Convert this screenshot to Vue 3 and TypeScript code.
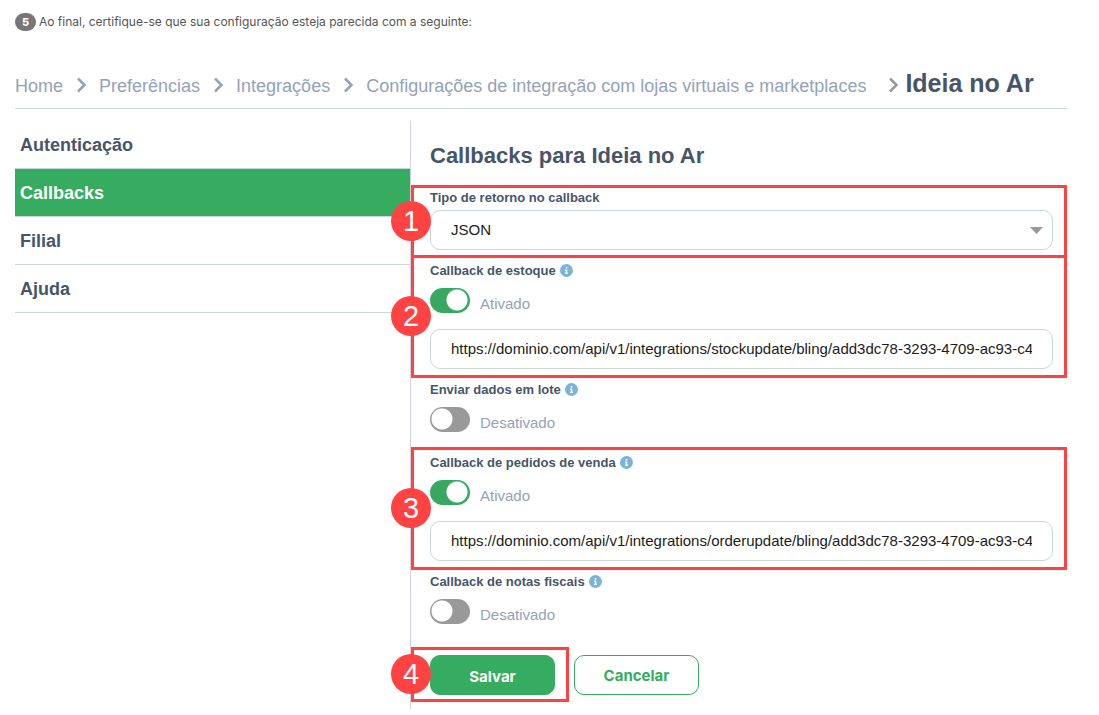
<script setup lang="ts">
import { reactive, ref } from 'vue'

interface Crumb {
  label: string
}

interface Callback {
  id: string
  title: string
  active: boolean
  step?: number
  url?: string
}

const crumbs: Crumb[] = [
  { label: 'Home' },
  { label: 'Preferências' },
  { label: 'Integrações' },
  { label: 'Configurações de integração com lojas virtuais e marketplaces' },
]

const tabs: string[] = ['Autenticação', 'Callbacks', 'Filial', 'Ajuda']
const currentTab = ref('Callbacks')
const returnType = ref('JSON')

const callbacks = reactive<Callback[]>([
  {
    id: 'estoque',
    title: 'Callback de estoque',
    active: true,
    step: 2,
    url: 'https://dominio.com/api/v1/integrations/stockupdate/bling/add3dc78-3293-4709-ac93-c4',
  },
  { id: 'lote', title: 'Enviar dados em lote', active: false },
  {
    id: 'pedidos',
    title: 'Callback de pedidos de venda',
    active: true,
    step: 3,
    url: 'https://dominio.com/api/v1/integrations/orderupdate/bling/add3dc78-3293-4709-ac93-c4',
  },
  { id: 'notas', title: 'Callback de notas fiscais', active: false },
])
</script>

<template>
  <main class="page">
    <p class="intro"><span class="intro-step">5</span>Ao final, certifique-se que sua configuração esteja parecida com a seguinte:</p>

    <header class="crumbs">
      <template v-for="crumb in crumbs" :key="crumb.label">
        <a class="crumb" href="#">{{ crumb.label }}</a>
        <svg class="chevron" viewBox="0 0 10 16" aria-hidden="true"><path d="M1 1.500 7.500 8 1 14.500" /></svg>
      </template>
      <h1 class="page-title">Ideia no Ar</h1>
    </header>

    <div class="columns">
      <nav class="tabs">
        <a
          v-for="tab in tabs"
          :key="tab"
          class="tab"
          :class="{ current: tab === currentTab }"
          href="#"
          @click.prevent="currentTab = tab"
        >{{ tab }}</a>
      </nav>

      <form class="panel" @submit.prevent>
        <h2 class="panel-title">Callbacks para Ideia no Ar</h2>

        <section class="group marked type-group">
          <span class="step">1</span>
          <label class="label" for="return-type">Tipo de retorno no callback</label>
          <div class="select-wrap">
            <select id="return-type" v-model="returnType" class="field">
              <option>JSON</option>
              <option>XML</option>
            </select>
            <svg class="caret" viewBox="0 0 13 7" aria-hidden="true"><path d="M0 0h13L6.500 7z" /></svg>
          </div>
        </section>

        <section
          v-for="item in callbacks"
          :key="item.id"
          class="group"
          :class="item.step ? 'marked' : 'plain'"
        >
          <span v-if="item.step" class="step">{{ item.step }}</span>
          <div class="label-row">
            <label class="label" :for="item.id">{{ item.title }}</label>
            <svg class="info" viewBox="0 0 13 13" aria-hidden="true">
              <circle cx="6.500" cy="6.500" r="6.500" />
              <path d="M5.700 3h1.600v1.500H5.700zM5 5.400h2.300v3.400H8v1.100H5V8.800h.7V6.500H5z" />
            </svg>
          </div>
          <div class="toggle-row">
            <input :id="item.id" v-model="item.active" class="toggle" type="checkbox" role="switch" />
            <span class="status">{{ item.active ? 'Ativado' : 'Desativado' }}</span>
          </div>
          <input v-if="item.url" v-model="item.url" class="field url" type="text" :aria-label="'URL: ' + item.title" />
        </section>

        <div class="actions">
          <div class="save-frame">
            <span class="step">4</span>
            <button class="button primary" type="submit">Salvar</button>
          </div>
          <button class="button" type="button">Cancelar</button>
        </div>
      </form>
    </div>
  </main>
</template>

<style>
body {
  margin: 0;
  background: #fff;
}
</style>

<style scoped>
.page,
.page * {
  box-sizing: border-box;
}

.page {
  padding: 12px 32px 6px 15px;
  font-family: "Liberation Sans", Arial, sans-serif;
  color: #475569;
}

.intro {
  display: flex;
  align-items: center;
  gap: 3px;
  margin: 0;
  font: 12px/20px Inter, sans-serif;
  color: #555;
}

.intro-step {
  width: 21px;
  height: 18px;
  border-radius: 9px;
  background: #777;
  color: #fff;
  font-size: 11px;
  font-weight: 800;
  line-height: 18px;
  text-align: center;
}

.crumbs {
  display: flex;
  align-items: baseline;
  height: 77px;
  padding-top: 36px;
  border-bottom: 1px solid #cbd5e1;
  white-space: nowrap;
}

.crumb {
  font-size: 18px;
  line-height: 30px;
  color: #94a3b8;
  text-decoration: none;
}

.chevron {
  flex: none;
  align-self: flex-start;
  width: 10px;
  height: 16px;
  margin: 9px 12px 0 14px;
  fill: none;
  stroke: #94a3b8;
  stroke-width: 2.5;
}

.chevron:last-of-type {
  margin-right: 6px;
  margin-left: 23px;
  stroke: #999;
}

.page-title {
  margin: 0;
  font-size: 25px;
  line-height: 30px;
}

.columns {
  display: grid;
  grid-template-columns: 395fr 657fr;
  margin-top: 12px;
}

.tab {
  display: block;
  height: 48px;
  padding-left: 5px;
  border-bottom: 1px solid #cbd5e1;
  font-size: 18px;
  font-weight: bold;
  line-height: 48px;
  color: #475569;
  text-decoration: none;
}

.tab.current {
  background: #35ac60;
  background-clip: padding-box;
  color: #fff;
}

.panel {
  padding: 21px 0 7px;
  border-left: 1px solid #cbd5e1;
}

.panel-title {
  margin: 0 0 15px 19px;
  font-size: 22px;
  line-height: 28px;
}

.group {
  position: relative;
}

.group.plain {
  padding: 3px 14px 15px 19px;
}

.group.marked {
  padding: 4px 11px 6px 16px;
  border: 3px solid #ff4242;
}

.group.type-group {
  margin-bottom: -3px;
  padding-top: 1px;
  padding-bottom: 5px;
}

.label-row {
  display: flex;
  align-items: center;
  gap: 4px;
  margin-bottom: 8px;
}

.label {
  display: block;
  font-size: 13px;
  font-weight: bold;
  line-height: 18px;
}

.info {
  width: 13px;
  height: 13px;
  margin-bottom: 2px;
}

.info circle {
  fill: #7cb4d9;
}

.info path {
  fill: #fff;
}

.field {
  display: block;
  width: 100%;
  height: 40px;
  margin: 0;
  padding: 0 20px 2px;
  border: 1px solid #cbd5e1;
  border-radius: 10px;
  background: #fff;
  color: #1c1c1c;
  font: 15px "Liberation Sans", Arial, sans-serif;
  appearance: none;
}

.select-wrap {
  position: relative;
  margin-top: 3px;
}

.caret {
  position: absolute;
  top: 17px;
  right: 10px;
  width: 13px;
  height: 7px;
  fill: #999;
  pointer-events: none;
}

.toggle-row {
  display: flex;
  gap: 10px;
}

.toggle {
  display: block;
  width: 40px;
  height: 25px;
  margin: 0;
  border-radius: 13px;
  background: radial-gradient(circle at 12px 12px, #fff 10px, #999 11px);
  appearance: none;
}

.toggle:checked {
  background: radial-gradient(circle at 27px 12px, #fff 10px, #38a860 11px);
}

.status {
  margin-top: 7px;
  font-size: 15px;
  line-height: 18px;
  color: #94a3b8;
}

.url {
  margin-top: 16px;
}

.step {
  position: absolute;
  z-index: 1;
  top: calc(50% - 21px);
  left: -23px;
  width: 40px;
  height: 40px;
  border-radius: 50%;
  background: #ff4242;
  color: #fff;
  font-size: 29px;
  line-height: 40px;
  text-align: center;
}

.actions {
  display: flex;
  align-items: center;
  gap: 5px;
  margin-top: 8px;
}

.save-frame {
  position: relative;
  padding: 5px 11px 4px 16px;
  border: 3px solid #ff4242;
}

.button {
  display: block;
  width: 125px;
  height: 40px;
  padding: 2px 0 0;
  border: 1px solid #35ac60;
  border-radius: 10px;
  background: #fff;
  color: #35ac60;
  font: bold 15px Inter, sans-serif;
}

.button.primary {
  background: #35ac60;
  color: #fff;
}
</style>
